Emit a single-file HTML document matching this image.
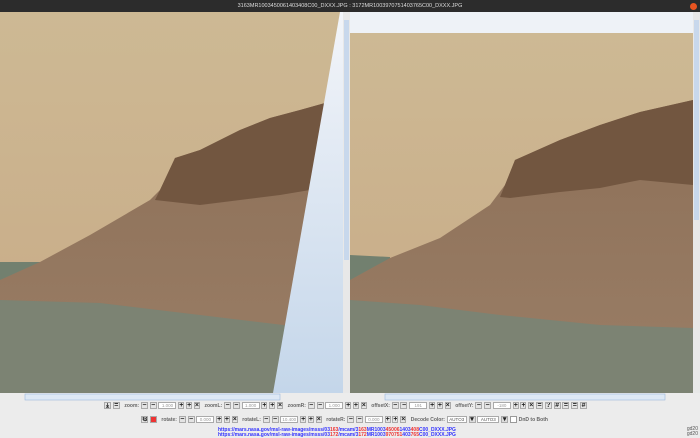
<!DOCTYPE html>
<html><head><style>
*{margin:0;padding:0;box-sizing:border-box}
body{width:700px;height:438px;overflow:hidden;background:#ececec;font-family:"Liberation Sans",sans-serif;position:relative}
.t{position:absolute;left:0;top:0;width:700px;height:12px;background:#2c2c2c;color:#ddd;font-size:5.5px;text-align:center;line-height:12px}
.ctl{position:absolute;font-size:5px;color:#666;font-weight:bold;white-space:nowrap;display:flex;align-items:center;gap:1.8px;height:9px}
.b{display:inline-block;width:7px;height:7px;background:#e4e4e4;border:1px solid #aaa;font-size:7px;line-height:5px;text-align:center;color:#222;font-weight:bold;overflow:hidden}
.i{display:inline-block;width:18px;height:7px;background:#fff;border:1px solid #aaa;font-size:4.5px;color:#999;line-height:5px;text-align:center;font-weight:normal}
.g{width:6px}
.u{position:absolute;left:218px;font-size:5px;color:#33f;font-weight:bold}
.u b{color:#e33}
</style></head><body>
<div class="t">3163MR1003450061403408C00_DXXX.JPG : 3172MR1003970751403765C00_DXXX.JPG<span style="position:absolute;right:3px;top:3px;width:7px;height:7px;border-radius:50%;background:#e95420"></span></div>
<svg style="position:absolute;left:0;top:0" width="700" height="402">
<defs>
<linearGradient id="sk" x1="0" y1="0" x2="0" y2="1"><stop offset="0" stop-color="#cdb994"/><stop offset="1" stop-color="#c8aa86"/></linearGradient>
<linearGradient id="w" x1="0" y1="0" x2="0" y2="1"><stop offset="0" stop-color="#f3f5f9"/><stop offset="1" stop-color="#c4d6ea"/></linearGradient>
<linearGradient id="hl" x1="0" y1="0" x2="0" y2="1"><stop offset="0" stop-color="#8d7058"/><stop offset="1" stop-color="#9a7e66"/></linearGradient>
</defs>
<rect x="0" y="12" width="343" height="381" fill="url(#sk)"/>
<polygon points="0,262 40,262 40,275 0,282" fill="#72806f"/>
<polygon points="0,280 40,262 90,235 150,200 160,190 175,158 200,150 240,130 270,118 300,110 325,103 340,100 343,400 0,400" fill="url(#hl)"/>
<polygon points="155,200 160,190 175,158 200,150 240,130 270,118 300,110 325,103 318,150 310,190 280,195 240,200 200,205" fill="#725640"/>
<polygon points="0,300 100,303 200,315 300,327 343,330 343,400 0,400" fill="#7c8373"/>
<polygon points="340,12 343,12 343,393 273,393" fill="url(#w)"/>
<rect x="343" y="12" width="7" height="381" fill="#e8e8e8"/><rect x="344" y="20" width="5" height="240" fill="#c8d8ec"/>
<rect x="350" y="12" width="343" height="21" fill="#eef2f7"/>
<rect x="350" y="33" width="343" height="360" fill="url(#sk)"/>
<polygon points="350,255 390,257 390,270 350,282" fill="#72806f"/>
<polygon points="350,280 390,258 440,238 490,205 505,185 515,160 560,140 600,125 640,112 693,100 693,393 350,393" fill="url(#hl)"/>
<polygon points="500,197 505,185 515,160 560,140 600,125 640,112 693,100 693,185 640,180 600,188 560,192 510,198" fill="#725640"/>
<polygon points="350,300 420,305 500,315 600,325 693,328 693,393 350,393" fill="#7c8373"/>
<rect x="693" y="12" width="7" height="381" fill="#e8e8e8"/><rect x="694" y="20" width="5" height="200" fill="#c8d8ec"/>
<rect x="0" y="393" width="700" height="9" fill="#ececec"/>
<rect x="25" y="394" width="255" height="6" fill="#dde8f5" stroke="#9bb8dc" stroke-width="0.6"/>
<rect x="385" y="394" width="280" height="6" fill="#dde8f5" stroke="#9bb8dc" stroke-width="0.6"/>
</svg>
<div class="ctl" style="left:104px;top:401px"><span class="b">⤓</span><span class="b">=</span>&nbsp; zoom: <span class="b">−</span><span class="b">−</span><span class="i">1.000</span><span class="b g">+</span><span class="b g">+</span><span class="b g">×</span>&nbsp; zoomL: <span class="b">−</span><span class="b">−</span><span class="i">1.000</span><span class="b g">+</span><span class="b g">+</span><span class="b g">×</span>&nbsp; zoomR: <span class="b">−</span><span class="b">−</span><span class="i">1.000</span><span class="b g">+</span><span class="b g">+</span><span class="b g">×</span>&nbsp; offsetX: <span class="b">−</span><span class="b">−</span><span class="i">191</span><span class="b g">+</span><span class="b g">+</span><span class="b g">×</span>&nbsp; offsetY: <span class="b">−</span><span class="b">−</span><span class="i">-180</span><span class="b g">+</span><span class="b g">+</span><span class="b g">×</span> <span class="b">=</span><span class="b">?</span><span class="b">#</span><span class="b">=</span><span class="b">=</span><span class="b">#</span></div>
<div class="ctl" style="left:141px;top:415px"><span class="b">⚙</span><span class="b" style="background:#e33"></span>&nbsp; rotate: <span class="b">−</span><span class="b">−</span><span class="i">0.000</span><span class="b g">+</span><span class="b g">+</span><span class="b g">×</span>&nbsp; rotateL: <span class="b">−</span><span class="b">−</span><span class="i">10.400</span><span class="b g">+</span><span class="b g">+</span><span class="b g">×</span>&nbsp; rotateR: <span class="b">−</span><span class="b">−</span><span class="i">0.000</span><span class="b g">+</span><span class="b g">+</span><span class="b g">×</span>&nbsp; Decode Color: <span class="i" style="width:20px;color:#555">AUTO3</span><span class="b" style="background:#ddd">▾</span><span class="i" style="width:22px;color:#555">AUTO3</span><span class="b" style="background:#ddd">▾</span> <span class="b" style="background:#fff;border-color:#999"></span> DnD to Both</div>
<div class="u" style="top:427px">https://mars.nasa.gov/msl-raw-images/msss/03<b>163</b>/mcam/3<b>163</b>MR1003<b>45006</b>1403<b>408</b>C00_DXXX.JPG</div>
<div class="u" style="top:432px">https://mars.nasa.gov/msl-raw-images/msss/03<b>172</b>/mcam/3<b>172</b>MR1003<b>970751</b>403<b>765</b>C00_DXXX.JPG</div>
<div style="position:absolute;right:2px;top:427px;font-size:5px;color:#555;line-height:5px">gd20<br>gd20</div>
</body></html>
